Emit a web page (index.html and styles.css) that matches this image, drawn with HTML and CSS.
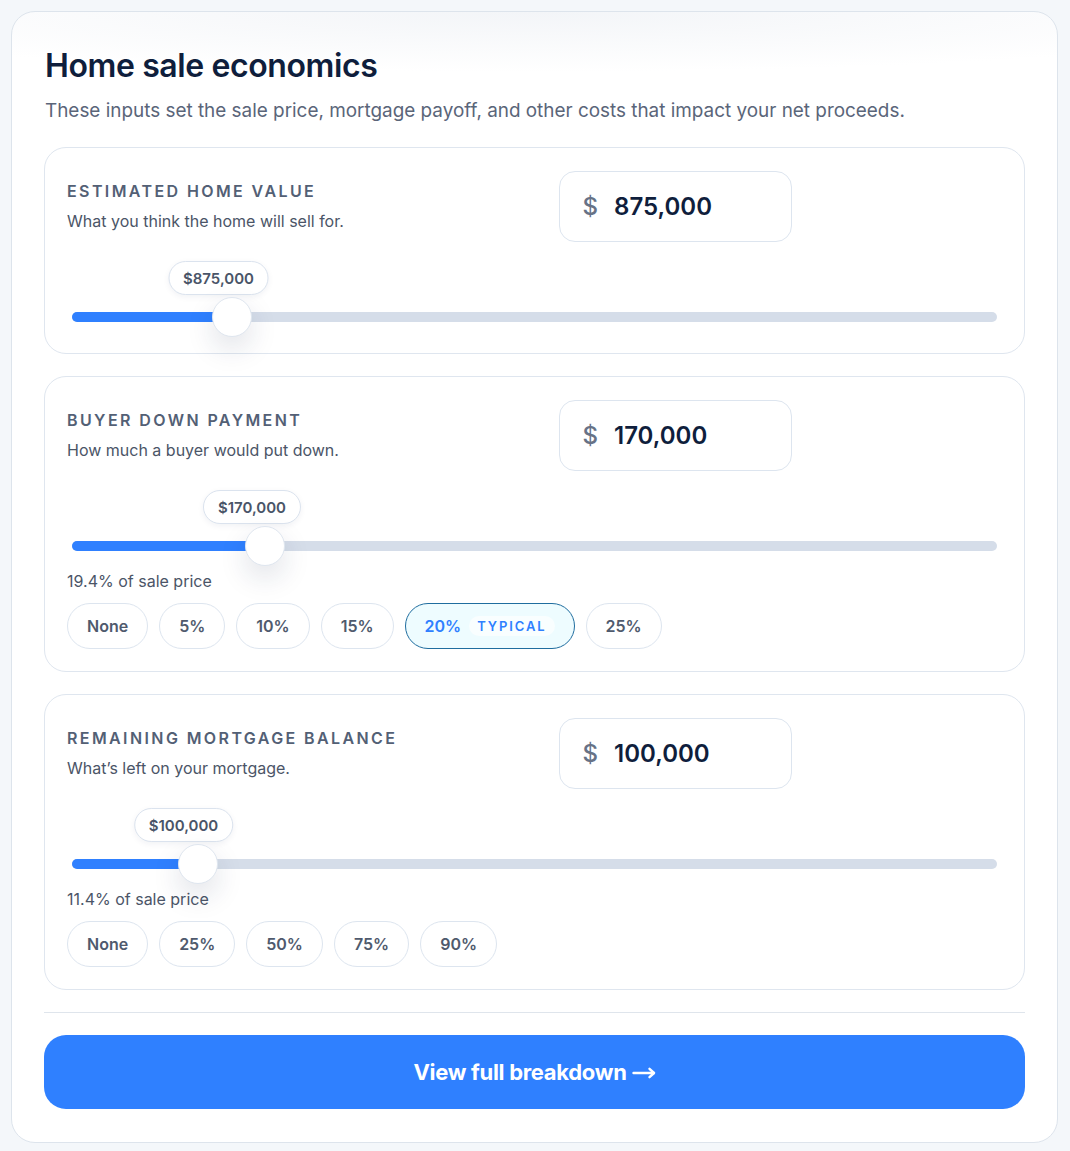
FILE: index.html
```html
<!DOCTYPE html>
<html lang="en">
<head>
    <meta charset="UTF-8">
    <meta name="viewport" content="width=device-width, initial-scale=1.0">
    <title>Home sale economics</title>
    <link rel="stylesheet" href="styles.css">
</head>
<body>
    <div class="panel">
        <h1>Home sale economics</h1>
        <p class="intro">These inputs set the sale price, mortgage payoff, and other costs that impact your net proceeds.</p>

        <div class="field">
            <div class="field-head">
                <div>
                    <div class="field-label">Estimated home value</div>
                    <div class="field-desc">What you think the home will sell for.</div>
                </div>
                <div class="money-input">
                    <span class="currency">$</span>
                    <span class="money-value">875,000</span>
                </div>
            </div>
            <div class="slider">
                <div class="track"><div class="fill" style="width: 160px;"></div></div>
                <div class="bubble" style="left: 146.5px;">$875,000</div>
                <div class="thumb" style="left: 160px;"></div>
            </div>
        </div>

        <div class="field">
            <div class="field-head">
                <div>
                    <div class="field-label">Buyer down payment</div>
                    <div class="field-desc">How much a buyer would put down.</div>
                </div>
                <div class="money-input">
                    <span class="currency">$</span>
                    <span class="money-value">170,000</span>
                </div>
            </div>
            <div class="slider">
                <div class="track"><div class="fill" style="width: 192.5px;"></div></div>
                <div class="bubble" style="left: 180px;">$170,000</div>
                <div class="thumb" style="left: 192.5px;"></div>
            </div>
            <div class="share">19.4% of sale price</div>
            <div class="presets">
                <button class="pill">None</button>
                <button class="pill">5%</button>
                <button class="pill">10%</button>
                <button class="pill">15%</button>
                <button class="pill pill-active">20% <span class="tag">Typical</span></button>
                <button class="pill">25%</button>
            </div>
        </div>

        <div class="field">
            <div class="field-head">
                <div>
                    <div class="field-label">Remaining mortgage balance</div>
                    <div class="field-desc">What’s left on your mortgage.</div>
                </div>
                <div class="money-input">
                    <span class="currency">$</span>
                    <span class="money-value">100,000</span>
                </div>
            </div>
            <div class="slider">
                <div class="track"><div class="fill" style="width: 126px;"></div></div>
                <div class="bubble" style="left: 111.5px;">$100,000</div>
                <div class="thumb" style="left: 126px;"></div>
            </div>
            <div class="share">11.4% of sale price</div>
            <div class="presets">
                <button class="pill">None</button>
                <button class="pill">25%</button>
                <button class="pill">50%</button>
                <button class="pill">75%</button>
                <button class="pill">90%</button>
            </div>
        </div>

        <hr class="divider">

        <button class="btn-primary">
            View full breakdown
            <svg class="arrow" width="24" height="14" viewBox="0 0 24 14" fill="none" stroke="#fff" stroke-width="2.4" stroke-linecap="round" stroke-linejoin="round">
                <path d="M1.5 7H22"/>
                <path d="M17.5 2.8L22 7L17.5 11.2"/>
            </svg>
        </button>
    </div>
</body>
</html>
```

FILE: styles.css
```css
* {
    box-sizing: border-box;
}
body {
    font-family: Inter, "Noto Sans", Arial, sans-serif;
    background-color: #f4f7fa;
    color: #0f1e3c;
    margin: 0;
    padding: 11px 12px 9px 11px;
}
.panel {
    background: radial-gradient(ellipse 75% 60px at 50% 0, #f3f5f8 0, #ffffff 100%);
    background-color: #fff;
    border: 1px solid #dde4ec;
    border-radius: 24px;
    padding: 35px 32px 33px 32px;
}
h1 {
    font-size: 32px;
    line-height: 38px;
    font-weight: 600;
    letter-spacing: -0.4px;
    margin: 0 0 13px 1px;
    color: #0f1e3c;
}
.intro {
    font-size: 18.9px;
    line-height: 26px;
    color: #5a6579;
    margin: 0 0 23px 1px;
}
.field {
    border: 1px solid #dfe6ef;
    border-radius: 22px;
    padding: 23px 22px 22px 22px;
    margin-bottom: 22px;
    background-color: #fff;
}
.field-head {
    display: grid;
    grid-template-columns: 1fr 1fr;
    gap: 48px;
    align-items: center;
}
.field-label {
    font-size: 16px;
    line-height: 20px;
    font-weight: 600;
    letter-spacing: 2.4px;
    text-transform: uppercase;
    color: #536075;
    margin-bottom: 9px;
}
.field-desc {
    font-size: 16px;
    line-height: 22px;
    color: #4b5567;
}
.money-input {
    display: flex;
    align-items: center;
    gap: 16px;
    width: 233px;
    height: 71px;
    padding: 0 23px;
    border: 1px solid #dde5ef;
    border-radius: 16px;
    font-size: 24px;
}
.currency {
    color: #677286;
    font-weight: 500;
}
.money-value {
    font-weight: 600;
    color: #0f1e3c;
}
.slider {
    position: relative;
    height: 70px;
    margin: 19px 5px 0 5px;
}
.track {
    position: absolute;
    left: 0;
    right: 0;
    top: 51px;
    height: 10px;
    border-radius: 5px;
    background-color: #d5dde9;
    overflow: hidden;
}
.fill {
    height: 100%;
    background-color: #2f80ff;
}
.bubble {
    position: absolute;
    top: 0;
    transform: translateX(-50%);
    height: 34px;
    padding: 0 14px;
    display: flex;
    align-items: center;
    border: 1px solid #dbe3ee;
    border-radius: 999px;
    background-color: #fff;
    box-shadow: 0 2px 6px rgba(20, 40, 80, 0.06);
    font-size: 15px;
    font-weight: 600;
    color: #4a5568;
    white-space: nowrap;
}
.thumb {
    position: absolute;
    top: 36px;
    width: 40px;
    height: 40px;
    margin-left: -20px;
    border-radius: 50%;
    background-color: #fff;
    border: 1px solid #dfe6ef;
    box-shadow: 0 12px 28px rgba(20, 40, 80, 0.13);
}
.share {
    font-size: 16px;
    line-height: 20px;
    color: #4b5567;
    margin-top: 11px;
}
.presets {
    display: flex;
    gap: 11px;
    margin-top: 12px;
}
.pill {
    font-family: inherit;
    height: 46px;
    padding: 0 19px;
    border: 1px solid #dde5ef;
    border-radius: 999px;
    background-color: #fff;
    font-size: 16px;
    font-weight: 600;
    color: #4f5a6d;
    display: flex;
    align-items: center;
    gap: 8px;
    cursor: pointer;
}
.pill-active {
    border-color: #1f6d9f;
    background-color: #eefcff;
    color: #2f80ff;
}
.tag {
    background-color: #f9feff;
    border-radius: 999px;
    padding: 2px 8px;
    font-size: 13px;
    font-weight: 600;
    letter-spacing: 1.9px;
    text-transform: uppercase;
    color: #2f80ff;
}
.divider {
    border: none;
    border-top: 1px solid #dfe5ec;
    margin: 0 0 22px 0;
}
.btn-primary {
    display: flex;
    align-items: center;
    justify-content: center;
    gap: 5px;
    width: 100%;
    height: 74px;
    border: none;
    border-radius: 22px;
    background-color: #2f80ff;
    color: #fff;
    font-family: inherit;
    font-size: 22px;
    font-weight: 700;
    letter-spacing: -0.3px;
    cursor: pointer;
}
.arrow {
    margin-top: 2px;
}
```
